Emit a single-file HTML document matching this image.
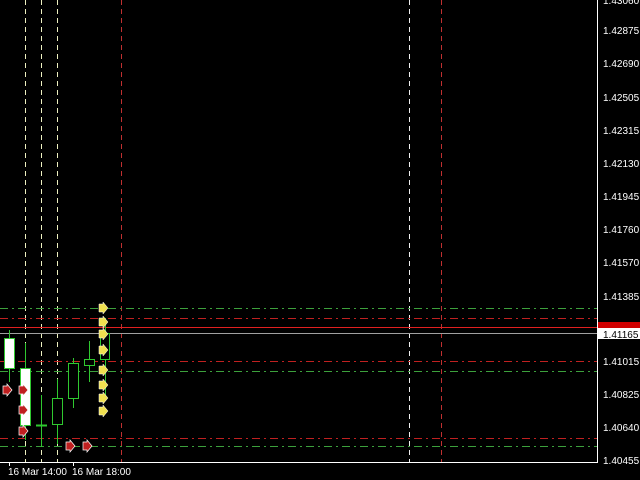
<!DOCTYPE html><html><head><style>body{margin:0;background:#000;width:640px;height:480px;overflow:hidden;font-family:"Liberation Sans",sans-serif}</style></head><body>
<svg width="640" height="480" xmlns="http://www.w3.org/2000/svg" style="position:absolute;left:0;top:0">
<g stroke-width="1" fill="none">
<line x1="25.5" y1="0" x2="25.5" y2="462" stroke="#eef0c0" stroke-dasharray="5,4"/>
<line x1="41.5" y1="0" x2="41.5" y2="462" stroke="#eef0c0" stroke-dasharray="5,4"/>
<line x1="57.5" y1="0" x2="57.5" y2="462" stroke="#eef0c0" stroke-dasharray="5,4"/>
<line x1="121.5" y1="0" x2="121.5" y2="462" stroke="#c03030" stroke-dasharray="5,4"/>
<line x1="409.5" y1="0" x2="409.5" y2="462" stroke="#eeeeee" stroke-dasharray="5,4"/>
<line x1="441.5" y1="0" x2="441.5" y2="462" stroke="#c03030" stroke-dasharray="5,4"/>
<line x1="0" y1="308.5" x2="597" y2="308.5" stroke="#3ca03c" stroke-dasharray="8,4,2,4"/>
<line x1="0" y1="318.5" x2="597" y2="318.5" stroke="#c02020" stroke-dasharray="8,4,2,4"/>
<line x1="0" y1="327.5" x2="597" y2="327.5" stroke="#e02020"/>
<line x1="0" y1="333.5" x2="597" y2="333.5" stroke="#a0a0a0"/>
<line x1="0" y1="361.5" x2="597" y2="361.5" stroke="#c02020" stroke-dasharray="8,4,2,4"/>
<line x1="0" y1="371.5" x2="597" y2="371.5" stroke="#3ca03c" stroke-dasharray="8,4,2,4"/>
<line x1="0" y1="438.5" x2="597" y2="438.5" stroke="#c02020" stroke-dasharray="8,4,2,4"/>
<line x1="0" y1="446.5" x2="597" y2="446.5" stroke="#3ca03c" stroke-dasharray="8,4,2,4"/>
</g>
<g stroke="#2fc82f" stroke-width="1">
<line x1="9.5" y1="330" x2="9.5" y2="382"/><rect x="4.5" y="338.5" width="10" height="30" fill="#fff"/>
<line x1="25.5" y1="343" x2="25.5" y2="440"/><rect x="20.5" y="368.5" width="10" height="57" fill="#fff"/>
<line x1="41.5" y1="395" x2="41.5" y2="447"/><line x1="36" y1="425.5" x2="47" y2="425.5" stroke-width="2"/>
<line x1="57.5" y1="379" x2="57.5" y2="444"/><rect x="52.5" y="398.5" width="10" height="26" fill="#000"/>
<line x1="73.5" y1="358" x2="73.5" y2="408"/><rect x="68.5" y="363.5" width="10" height="35" fill="#000"/>
<line x1="89.5" y1="341" x2="89.5" y2="382"/><rect x="84.5" y="359.5" width="10" height="6" fill="#000"/>
<line x1="105.5" y1="318" x2="105.5" y2="395"/><rect x="100.5" y="333.5" width="9" height="26" fill="#000"/>
</g>
<g fill="#f0e050" stroke="#fff" stroke-width="0.5">
<path d="M99 304h4v-2l5 6-5 6v-2h-4z"/><path d="M99 318h4v-2l5 6-5 6v-2h-4z"/><path d="M99 330h4v-2l5 6-5 6v-2h-4z"/><path d="M99 346h4v-2l5 6-5 6v-2h-4z"/><path d="M99 366h4v-2l5 6-5 6v-2h-4z"/><path d="M99 381h4v-2l5 6-5 6v-2h-4z"/><path d="M99 394h4v-2l5 6-5 6v-2h-4z"/><path d="M99 407h4v-2l5 6-5 6v-2h-4z"/>
</g>
<g fill="#c02020" stroke="#fff" stroke-width="0.7">
<path d="M3 386h4v-2l5 6-5 6v-2h-4z"/><path d="M19 386h4v-2l5 6-5 6v-2h-4z"/><path d="M19 406h4v-2l5 6-5 6v-2h-4z"/><path d="M19 427h4v-2l5 6-5 6v-2h-4z"/><path d="M66 442h4v-2l5 6-5 6v-2h-4z"/><path d="M83 442h4v-2l5 6-5 6v-2h-4z"/>
</g>
<line x1="597.5" y1="0" x2="597.5" y2="463" stroke="#fff"/>
<line x1="0" y1="462.5" x2="598" y2="462.5" stroke="#fff"/>
<rect x="598" y="322" width="42" height="6" fill="#d00000"/>
<rect x="598" y="328" width="42" height="11" fill="#fff"/>
<g fill="#fff" font-size="10" stroke="none">
<text x="603" y="4">1.43060</text>
<text x="603" y="34">1.42875</text>
<text x="603" y="67">1.42690</text>
<text x="603" y="101">1.42505</text>
<text x="603" y="134">1.42315</text>
<text x="603" y="167">1.42130</text>
<text x="603" y="200">1.41945</text>
<text x="603" y="233">1.41760</text>
<text x="603" y="266">1.41570</text>
<text x="603" y="300">1.41385</text>
<text x="603" y="338" fill="#000">1.41165</text>
<text x="603" y="365">1.41015</text>
<text x="603" y="398">1.40825</text>
<text x="603" y="431">1.40640</text>
<text x="603" y="464">1.40455</text>
<text x="8" y="475">16 Mar 14:00</text>
<text x="72" y="475">16 Mar 18:00</text>
</g>
<g stroke="#fff"><line x1="9.5" y1="463" x2="9.5" y2="466"/><line x1="73.5" y1="463" x2="73.5" y2="466"/></g>
</svg></body></html>
